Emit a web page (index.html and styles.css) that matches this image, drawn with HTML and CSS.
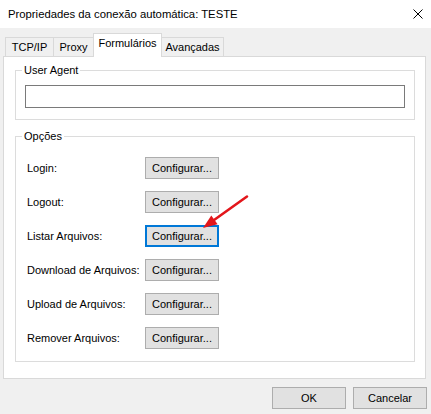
FILE: index.html
```html
<!DOCTYPE html>
<html lang="pt">
<head>
<meta charset="utf-8">
<title>Propriedades da conexão automática: TESTE</title>
<link rel="stylesheet" href="styles.css">
</head>
<body>
<div class="window">
  <div class="titlebar">
    <span class="title">Propriedades da conexão automática: TESTE</span>
    <svg class="close" width="10" height="10" viewBox="0 0 10 10"><path d="M0.5 0.5L9.5 9.5M9.5 0.5L0.5 9.5" stroke="#000" stroke-width="1" fill="none"/></svg>
  </div>
  <div class="tabs">
    <div class="tab tab-tcp">TCP/IP</div>
    <div class="tab tab-proxy">Proxy</div>
    <div class="tab tab-form active">Formulários</div>
    <div class="tab tab-adv">Avançadas</div>
  </div>
  <div class="panel">
    <fieldset class="group ua">
      <legend>User Agent</legend>
      <input class="text" type="text">
    </fieldset>
    <fieldset class="group opts">
      <legend>Opções</legend>
      <div class="row"><span class="label">Login:</span><button class="btn">Configurar...</button></div>
      <div class="row"><span class="label">Logout:</span><button class="btn">Configurar...</button></div>
      <div class="row"><span class="label">Listar Arquivos:</span><button class="btn focus">Configurar...</button></div>
      <div class="row"><span class="label">Download de Arquivos:</span><button class="btn">Configurar...</button></div>
      <div class="row"><span class="label">Upload de Arquivos:</span><button class="btn">Configurar...</button></div>
      <div class="row"><span class="label">Remover Arquivos:</span><button class="btn">Configurar...</button></div>
    </fieldset>
  </div>
  <div class="footer">
    <button class="btn">OK</button>
    <button class="btn">Cancelar</button>
  </div>
  <svg class="arrow" width="431" height="414" viewBox="0 0 431 414">
    <line x1="247" y1="196.5" x2="213" y2="220.7" stroke="#e3161b" stroke-width="2.6" stroke-linecap="round"/>
    <polygon points="203,228 217.6,224.2 211.3,215.4" fill="#e3161b"/>
  </svg>
</div>
</body>
</html>
```
FILE: styles.css
```css
body {
  margin: 0;
  background: #f0f0f0;
  font-family: "Liberation Sans", Arial, sans-serif;
  font-size: 11px;
  color: #000;
}

.window {
  position: relative;
  width: 431px;
  height: 414px;
  overflow: hidden;
  background: #f0f0f0;
}

.titlebar {
  height: 28px;
  background: #fff;
  display: flex;
  align-items: center;
  justify-content: space-between;
  padding: 0 8px;
  box-sizing: border-box;
}

.title {
  font-size: 11.3px;
}

.close {
  display: block;
}

.tabs {
  display: flex;
  align-items: flex-end;
  height: 23px;
  margin-top: 5px;
  padding-left: 5px;
  position: relative;
  z-index: 1;
}

.tab {
  height: 19px;
  box-sizing: border-box;
  border: 1px solid #d9d9d9;
  border-bottom: none;
  display: flex;
  align-items: center;
  justify-content: center;
  background: #f0f0f0;
}

.tab + .tab {
  margin-left: -1px;
}

.tab-tcp { width: 49px; }
.tab-proxy { width: 41px; }
.tab-form { width: 69px; }
.tab-adv { width: 63px; }

.tab.active {
  height: 24px;
  background: #fff;
  margin-bottom: -1px;
  padding-bottom: 5px;
  position: relative;
  z-index: 2;
}

.panel {
  margin-left: 3px;
  width: 423px;
  height: 323px;
  box-sizing: border-box;
  background: #fff;
  border: 1px solid #d9d9d9;
  padding: 6px 10px 0 11px;
}

.group {
  margin: 0;
  min-width: 0;
  border: 1px solid #dcdcdc;
}

.group legend {
  font-size: 11px;
  line-height: 14px;
  padding: 0 2px;
}

.ua {
  padding: 8px 9px 11px 9px;
}

.ua legend {
  margin-left: -3px;
}

.text {
  display: block;
  width: 100%;
  height: 23px;
  box-sizing: border-box;
  border: 1px solid #7a7a7a;
  margin: 0;
  padding: 0;
  background: #fff;
}

.opts {
  margin-top: 9px;
  padding: 14px 10px 12px 11px;
  display: flex;
  flex-direction: column;
  gap: 12px;
}

.opts legend {
  margin-left: -5px;
}

.row {
  display: flex;
  align-items: center;
  height: 22px;
}

.label {
  width: 118px;
  flex: none;
}

.btn {
  width: 74px;
  height: 22px;
  box-sizing: border-box;
  border: 1px solid #adadad;
  background: #e1e1e1;
  font-family: inherit;
  font-size: 11px;
  color: #000;
  padding: 0;
  margin: 0;
}

.btn.focus {
  border: 2px solid #0078d7;
}

.footer {
  display: flex;
  justify-content: flex-end;
  gap: 7px;
  padding: 8px 4px 0 0;
}

.arrow {
  position: absolute;
  left: 0;
  top: 0;
  pointer-events: none;
}
```
